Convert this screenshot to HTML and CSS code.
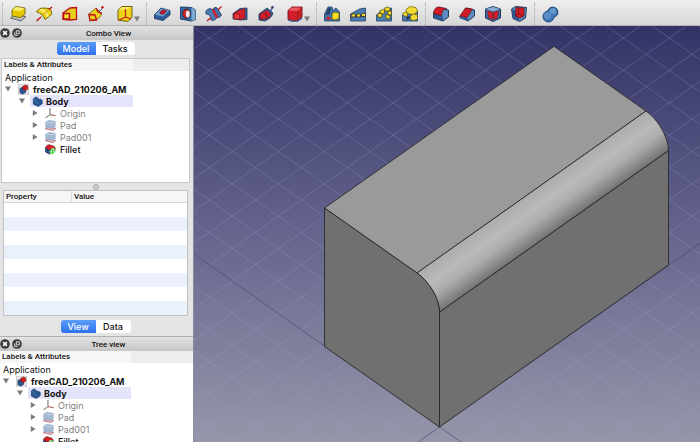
FILE: index.html
```html
<!DOCTYPE html>
<html lang="en">
<head>
    <meta charset="UTF-8">
    <meta name="viewport" content="width=device-width, initial-scale=1.0">
    <title>freeCAD_210206_AM</title>
    <link rel="stylesheet" href="styles.css">
</head>
<body>
    <!-- Shared icons -->
    <svg class="sprite" aria-hidden="true">
        <symbol id="i-close" viewBox="0 0 10 10">
            <circle cx="5" cy="5" r="4.8" fill="#3c3c3c"/>
            <path d="M3.1 3.1 6.9 6.9M6.9 3.1 3.1 6.9" stroke="#fff" stroke-width="1.5"/>
        </symbol>
        <symbol id="i-float" viewBox="0 0 10 10">
            <circle cx="5" cy="5" r="4.8" fill="#3c3c3c"/>
            <path d="M4.3 2.8h3v3h-3zM2.7 4.5v2.9h2.9" fill="none" stroke="#ddd" stroke-width="1"/>
        </symbol>
        <symbol id="i-down" viewBox="0 0 6 6"><path d="M0 .6h6L3 5.6z" fill="#7b7b7b"/></symbol>
        <symbol id="i-right" viewBox="0 0 6 6"><path d="M.8 0v6L5.6 3z" fill="#7b7b7b"/></symbol>
        <symbol id="i-doc" viewBox="0 0 10 10">
            <path d="M.5 0h9v10h-9z" fill="#e9e9ec" stroke="#aaa" stroke-width=".5"/>
            <path d="M1.8 4 4.2 3 7 4.5v3L4.4 9.2 1.8 8z" fill="#2a5693" stroke="#122c50" stroke-width=".6"/>
            <path d="M4.3 2.2 6.5.8l2.3 1v2.9L6.7 6 4.3 4.6z" fill="#d21c1c" stroke="#6d1010" stroke-width=".5"/>
        </symbol>
        <symbol id="i-body" viewBox="0 0 10 10">
            <path d="M1.2 2.5 3.5.8 5.7 2v1.5L7.5 2.8 9.3 4v3L5.7 9.5 1.2 7.4z" fill="#28578f" stroke="#1a4272" stroke-width=".6"/>
            <path d="M1.5 2.9 3.6 3.9v2L6 7" fill="none" stroke="#4b7db3" stroke-width=".7"/>
        </symbol>
        <symbol id="i-origin" viewBox="0 0 10 10">
            <path d="M4.5 0v6" stroke="#777" stroke-width="1"/>
            <path d="M4.5 6 .5 9" stroke="#6f936f" stroke-width="1"/>
            <path d="M4.5 6 9.8 7" stroke="#b06868" stroke-width="1"/>
        </symbol>
        <symbol id="i-pad" viewBox="0 0 10 10">
            <path d="M.3 7.9 3 6.8l6.7.8L7.5 9.6z" fill="#eec9cc" stroke="#bb6970" stroke-width=".8"/>
            <path d="M.7 1.7 3.5.4l5.8.7v5L7 7.7.7 6.8z" fill="#a3b8d2" stroke="#8ea4bf" stroke-width=".5"/>
            <path d="M.7 1.7 7 2.5 9.3 1.1" fill="none" stroke="#cfdcea" stroke-width=".7"/>
        </symbol>
        <symbol id="i-fillet" viewBox="0 0 11 11">
            <path d="M.5 3.8 4.5 6v4.3L.5 8z" fill="#244e87" stroke="#142c50" stroke-width=".6"/>
            <path d="M.5 3.8C1.2 1.3 3 .6 4.4.7l4.3 1.5c1 .6 1.6 1.6 1.6 2.9L4.5 6z" fill="#d51f26" stroke="#681212" stroke-width=".6"/>
            <path d="M4.5 6 10.3 4v4l-5.8 2.3z" fill="#3f9e43"/>
            <path d="M6.7 4.5h2v3h1.8l-2.8 3-2.8-3h1.8z" fill="#3ee03e" stroke="#e7ffe7" stroke-width=".6"/>
        </symbol>
    </svg>

    <header class="toolbar">
        <div class="tool-group">
            <button class="tool" aria-label="Pad">
                <svg viewBox="0 0 18 18"><path d="M1.500 13 5 10l12 1.500-5 4.500z" fill="#bdbdbd" stroke="#666" stroke-width="1"/><path d="M3 5 7 1.500 16 3v6l-4.500 3.500L3 11z" fill="#e3c800" stroke="#6b5c00" stroke-width=".8"/><path d="M3.500 5 7 2l8.500 1.200L11.500 6.300z" fill="#fbef6a"/></svg>
            </button>
            <button class="tool" aria-label="Revolution">
                <svg viewBox="0 0 18 18"><path d="M1.500 7C3 4 6 3 8 3l6 .5c2 1 3 3 2.500 6L10 14.500C9 11 6 8 1.500 7z" fill="#edd41c" stroke="#6b5c00" stroke-width=".9"/><path d="M5 4.800c4 .6 7 3.500 8 7" fill="none" stroke="#fff28a" stroke-width="1.500"/><path d="M1.500 16 6 12M14 4.500 17 2" stroke="#cc1111" stroke-width="1.400"/><path d="m6 12 8-7.500" stroke="#b38a16" stroke-width=".8"/></svg>
            </button>
            <button class="tool" aria-label="Additive loft">
                <svg viewBox="0 0 18 18"><path d="M2 8 9 3l6.500-.5v12L9 15l-7-.5z" fill="#e8cd1a" stroke="#b81414" stroke-width="1.300"/><path d="M2.500 8.500h6v5.500h-6z" fill="#f5de2e" stroke="#b81414" stroke-width="1.500"/></svg>
            </button>
            <button class="tool" aria-label="Additive pipe">
                <svg viewBox="0 0 18 18"><path d="M2 9 9 3l5 5c1 2-1 5-4 6l-7 1.500z" fill="#edd41c" stroke="#6e4c00" stroke-width=".8"/><path d="M2 9.500 8 10l1.500 5L3 15.500zM9 3l2 4 4 1.500" fill="none" stroke="#bd1717" stroke-width="1.400"/><path d="M12 6c2 0 3-2 3.500-4" fill="none" stroke="#2a4d91" stroke-width="1"/><circle cx="15.500" cy="2.300" r="1.200" fill="#c31818"/></svg>
            </button>
            <button class="tool tool-menu" aria-label="Additive primitive">
                <svg viewBox="0 0 18 18"><path d="M2 5 6 1.500h10V12l-4 4.500L2 15z" fill="#edd41c" stroke="#615000" stroke-width=".9"/><path d="M2.500 4.800 6 2h9.500L11 4.800z" fill="#f9ea60"/><path d="M9.500 4v8L3 15M9.500 12l5.500 2" fill="none" stroke="#c31b1b" stroke-width="1.200"/></svg>
                <svg class="arrow"><use href="#i-down"/></svg>
            </button>
        </div>
        <div class="tool-group">
            <button class="tool" aria-label="Pocket">
                <svg viewBox="0 0 18 18"><path d="M1.500 9.500 8 3l9 2.500v4.500L10 15.500l-8.500-2z" fill="#2c5c99" stroke="#173459" stroke-width=".8"/><path d="M2 9.500 8 3.500l8.500 2-6.500 6z" fill="#739fce"/><path d="m6.500 8 3-3 4 1L10 9.500z" fill="#d01c24" stroke="#602" stroke-width=".7"/></svg>
            </button>
            <button class="tool" aria-label="Hole">
                <svg viewBox="0 0 18 18"><path d="m1.500 2 11 .5 4 2.500v9.500l-4 1.500-11-2z" fill="#356aab" stroke="#14335c" stroke-width=".9"/><path d="M12.500 2.500 16.500 5v9.500l-4 1.500z" fill="#7ea9d2"/><ellipse cx="7.500" cy="8.700" rx="4" ry="4.700" fill="#d0202a" stroke="#222" stroke-width=".8"/><ellipse cx="8.800" cy="9" rx="2" ry="3.400" fill="#e9e9ee"/></svg>
            </button>
            <button class="tool" aria-label="Groove">
                <svg viewBox="0 0 18 18"><path d="M1 6c2-3 6-3 8 0l3 6c-1 3-4 4-6 3C6 11 4 9 1 9z" fill="#4a7db8" stroke="#173459" stroke-width=".8"/><path d="M8 4c1-1.500 3-2 4-1l4.500 7c-1 2-3 3-4.500 2.500z" fill="#3f72ac" stroke="#173459" stroke-width=".8"/><path d="m8 4.500 4 8" stroke="#d01f28" stroke-width="2.600"/><path d="M2 16 6 12.500M13 5l3.500-3.500" stroke="#c51d1d" stroke-width="1.400"/></svg>
            </button>
            <button class="tool" aria-label="Subtractive loft">
                <svg viewBox="0 0 18 18"><path d="m2 8.500 7-5 7-.5v11.500l-6 .5-8-1z" fill="#38659f" stroke="#173459" stroke-width=".8"/><path d="m2.500 8.500 7-4 4.500-.5v9.500L9 14.500l-6.500-1z" fill="#d01f28" stroke="#7b171c" stroke-width=".6"/><path d="M3 9h5.500v5H3z" fill="#e8363d" stroke="#901a20" stroke-width=".6"/></svg>
            </button>
            <button class="tool" aria-label="Subtractive pipe">
                <svg viewBox="0 0 18 18"><path d="m2 9 8-6 6 5c-1 4-4 6-8 8l-6-1z" fill="#38659f" stroke="#173459" stroke-width=".8"/><path d="m3 9 7-4 4 4c-1 3-2 4-5 5l-6 .5z" fill="#d01f28" stroke="#58121b" stroke-width=".6"/><path d="m8 8 2.500 5" stroke="#5a1218" stroke-width="1"/><path d="M12 6c2 0 3-2 3.500-4" fill="none" stroke="#2a4d91" stroke-width="1.100"/><circle cx="15.500" cy="2.300" r="1.200" fill="#26426c"/></svg>
            </button>
            <button class="tool tool-menu" aria-label="Subtractive primitive">
                <svg viewBox="0 0 18 18"><path d="M2 5.500 6 2h10v10l-4 4L2 14.500z" fill="#d01f28" stroke="#74131a" stroke-width=".9"/><path d="M2.500 5.500 6 2.500h9L11.500 6z" fill="#ea5a5e"/><path d="M12 6v10" stroke="#801a1a" stroke-width=".8"/><path d="m2 15 4 1.500 6-.5 4-3" fill="none" stroke="#315f99" stroke-width="1.200"/></svg>
                <svg class="arrow"><use href="#i-down"/></svg>
            </button>
        </div>
        <div class="tool-group">
            <button class="tool" aria-label="Mirrored">
                <svg viewBox="0 0 18 18"><path d="M1.500 9 5 2h4l1 3.500 3-2.500 3.500 4v9h-15z" fill="#4274ae" stroke="#203f66" stroke-width=".8"/><path d="m5 2.500 3 1-1.500 6L2.500 10z" fill="#26466f"/><path d="m2.500 13 3-1.500 3 2-3 1.500z" fill="#d01f28"/><path d="m9 8.500 3-1.500 4 1v5.500L12 15l-3-1z" fill="#f4dc27" stroke="#6b5c00" stroke-width=".8"/></svg>
            </button>
            <button class="tool" aria-label="Linear pattern">
                <svg viewBox="0 0 18 18"><path d="m1.500 9 9-5 6-1v13h-15z" fill="#4b7cb3" stroke="#203f66" stroke-width=".8"/><path d="m2 10 2.500-1.500 2 1v2.500H2zM7.500 9.500l2.500-1 1.500 1v2.500h-4zM12.500 9l2-1 2 1v2.500h-4z" fill="#efd729" stroke="#333" stroke-width=".9"/></svg>
            </button>
            <button class="tool" aria-label="Polar pattern">
                <svg viewBox="0 0 18 18"><path d="m1.500 10 5-4 10-3v13h-15z" fill="#4b7cb3" stroke="#203f66" stroke-width=".8"/><g fill="#f0d72a" stroke="#4e430a" stroke-width=".7"><path d="m2 9.500 3-1.500 2 1v3l-3 .5zM4.500 6l3-1.500 2 1v3l-3 .5zM9 3.500 12 2l3 1v3l-3.500.5zM12.500 6.500l2-1 2 1v3l-3 1zM10 10.500l3-1 2 1v3l-3 .5z"/></g></svg>
            </button>
            <button class="tool" aria-label="MultiTransform">
                <svg viewBox="0 0 18 18"><path d="m1.500 10 4-3 11-1v10h-15z" fill="#4b7cb3" stroke="#203f66" stroke-width=".8"/><g fill="#f2da2e" stroke="#6b5c00" stroke-width=".7"><path d="m5 4.500 4-3 6 1 1.500 4-3.500 3-7-1z"/><path d="m1.500 8.500 3-1.500 2 1v3l-3 .5zM9.500 11l3-2 4 1v4l-3.500 1.500-3.500-1z"/></g><path d="m5.500 12 3-1v3l-3 1z" fill="#1e355b"/></svg>
            </button>
        </div>
        <div class="tool-group">
            <button class="tool" aria-label="Fillet">
                <svg viewBox="0 0 18 18"><path d="M1.500 8 7 3l9.500 2v7L11 16l-9.500-3z" fill="#5b8bc0" stroke="#162e4f" stroke-width=".9"/><path d="m2 8 6 1.500 3 2.500v3.500l-9-3z" fill="#2d5a94"/><path d="M1.500 8.500C2 4 4 2 7 2l7.500 1.500C11 4.500 9.500 7 9.500 10.500z" fill="#d31d26" stroke="#5e1016" stroke-width=".7"/></svg>
            </button>
            <button class="tool" aria-label="Chamfer">
                <svg viewBox="0 0 18 18"><path d="M1.500 12 8 3l8.500 2v6L10 16z" fill="#5b8bc0" stroke="#162e4f" stroke-width=".9"/><path d="m2 12 8 1v2.500l-8-2z" fill="#2d5a94"/><path d="M2 11 7.500 3l7 1L9 12.500z" fill="#d31d26" stroke="#5e1016" stroke-width=".7"/></svg>
            </button>
            <button class="tool" aria-label="Draft">
                <svg viewBox="0 0 18 18"><path d="M1.500 4 9 1.500 16.500 4v9L9 16.500 1.500 13z" fill="#3b6da8" stroke="#162e4f" stroke-width=".9"/><path d="M2 4 9 2l7 2-7 2.500z" fill="#8aafd3"/><path d="m3.500 6 5 1.200v7.300l-4-2zM9.500 7.200l5-1.200-1 6.500-4 2z" fill="#d31d26" stroke="#8b1218" stroke-width=".6"/></svg>
            </button>
            <button class="tool" aria-label="Thickness">
                <svg viewBox="0 0 18 18"><path d="m1.500 4 4-2.500 11 1-1 10.500-6 3.500-6.500-3z" fill="#5b8bc0" stroke="#162e4f" stroke-width=".9"/><path d="m2 4.500 7 2.500v9l-6-3z" fill="#2d5a94"/><path d="M6 2.500 14 3v8L9.500 13 5.500 11z" fill="#d31d26" stroke="#611118" stroke-width=".7"/><path d="M8.500 3v6l-3 2M8.500 9l5.500 1.500" fill="none" stroke="#871017" stroke-width=".9"/></svg>
            </button>
        </div>
        <div class="tool-group">
            <button class="tool" aria-label="Boolean operation">
                <svg viewBox="0 0 18 18"><path d="M7 6a5 5 0 1 1 6 6A5.500 5.500 0 1 1 7 6z" fill="#3f77b6" stroke="#1d4273" stroke-width="1"/><circle cx="6.500" cy="10.500" r="3.500" fill="#5b8fc8"/><circle cx="12" cy="6" r="3" fill="#6497cc"/></svg>
            </button>
        </div>
    </header>

    <main class="workspace">
        <aside class="sidebar">
            <section class="dock combo">
                <div class="dock-title">
                    <button class="dock-button" aria-label="Close"><svg><use href="#i-close"/></svg></button>
                    <button class="dock-button" aria-label="Float"><svg><use href="#i-float"/></svg></button>
                    <h2>Combo View</h2>
                </div>
                <div class="pane">
                    <div class="tabs">
                        <button class="tab active">Model</button>
                        <button class="tab">Tasks</button>
                    </div>
                    <div class="tree">
                        <div class="tree-head"><span>Labels &amp; Attributes</span></div>
                        <ul>
                            <li class="row root">Application</li>
                            <li class="row level-1 strong"><button class="toggle" aria-label="Collapse"><svg><use href="#i-down"/></svg></button><svg class="icon"><use href="#i-doc"/></svg>freeCAD_210206_AM</li>
                            <li class="row level-2 strong"><button class="toggle" aria-label="Collapse"><svg><use href="#i-down"/></svg></button><span class="selected"><svg class="icon"><use href="#i-body"/></svg>Body</span></li>
                            <li class="row level-3 muted"><button class="toggle" aria-label="Expand"><svg><use href="#i-right"/></svg></button><svg class="icon"><use href="#i-origin"/></svg>Origin</li>
                            <li class="row level-3 muted"><button class="toggle" aria-label="Expand"><svg><use href="#i-right"/></svg></button><svg class="icon"><use href="#i-pad"/></svg>Pad</li>
                            <li class="row level-3 muted"><button class="toggle" aria-label="Expand"><svg><use href="#i-right"/></svg></button><svg class="icon"><use href="#i-pad"/></svg>Pad001</li>
                            <li class="row level-3 leaf"><svg class="icon"><use href="#i-fillet"/></svg>Fillet</li>
                        </ul>
                    </div>
                    <div class="splitter"></div>
                    <table class="properties">
                        <thead>
                            <tr><th class="name">Property</th><th>Value</th></tr>
                        </thead>
                        <tbody>
                            <tr><td></td><td></td></tr>
                            <tr><td></td><td></td></tr>
                            <tr><td></td><td></td></tr>
                            <tr><td></td><td></td></tr>
                            <tr><td></td><td></td></tr>
                            <tr><td></td><td></td></tr>
                            <tr><td></td><td></td></tr>
                            <tr><td></td><td></td></tr>
                        </tbody>
                    </table>
                    <div class="tabs tabs-small">
                        <button class="tab active">View</button>
                        <button class="tab">Data</button>
                    </div>
                </div>
            </section>

            <section class="dock tree-view">
                <div class="dock-title">
                    <button class="dock-button" aria-label="Close"><svg><use href="#i-close"/></svg></button>
                    <button class="dock-button" aria-label="Float"><svg><use href="#i-float"/></svg></button>
                    <h2>Tree view</h2>
                </div>
                <div class="tree">
                    <div class="tree-head"><span>Labels &amp; Attributes</span></div>
                    <ul>
                        <li class="row root">Application</li>
                        <li class="row level-1 strong"><button class="toggle" aria-label="Collapse"><svg><use href="#i-down"/></svg></button><svg class="icon"><use href="#i-doc"/></svg>freeCAD_210206_AM</li>
                        <li class="row level-2 strong"><button class="toggle" aria-label="Collapse"><svg><use href="#i-down"/></svg></button><span class="selected"><svg class="icon"><use href="#i-body"/></svg>Body</span></li>
                        <li class="row level-3 muted"><button class="toggle" aria-label="Expand"><svg><use href="#i-right"/></svg></button><svg class="icon"><use href="#i-origin"/></svg>Origin</li>
                        <li class="row level-3 muted"><button class="toggle" aria-label="Expand"><svg><use href="#i-right"/></svg></button><svg class="icon"><use href="#i-pad"/></svg>Pad</li>
                        <li class="row level-3 muted"><button class="toggle" aria-label="Expand"><svg><use href="#i-right"/></svg></button><svg class="icon"><use href="#i-pad"/></svg>Pad001</li>
                        <li class="row level-3 leaf"><svg class="icon"><use href="#i-fillet"/></svg>Fillet</li>
                    </ul>
                </div>
            </section>
        </aside>

        <div class="viewport">
            <svg class="scene" viewBox="194 26 506 416" preserveAspectRatio="xMinYMin slice" role="img" aria-label="3D model">
                <defs>
                    <linearGradient id="round" gradientUnits="userSpaceOnUse" x1="417" y1="273" x2="442.900" y2="309.600">
                        <stop offset="0" stop-color="#acacac"/>
                        <stop offset=".35" stop-color="#bababa"/>
                        <stop offset=".6" stop-color="#adadad"/>
                        <stop offset=".85" stop-color="#8b8b8b"/>
                        <stop offset="1" stop-color="#747474"/>
                    </linearGradient>
                </defs>
                <path id="grid" fill="none" stroke="#a9a9dc" stroke-opacity=".25" stroke-width="1"/>
                <!-- axes -->
                <path d="M193 253.400 461 442M418 442 700 243.300" fill="none" stroke="#3e3e68" stroke-opacity=".6" stroke-width=".9"/>
                <!-- solid -->
                <g stroke="#222" stroke-width=".8" stroke-linejoin="round">
                    <path d="M324.500 208 554 46.300 646 111 417 273z" fill="#9a9a9a"/>
                    <path d="M439.500 312 668.500 150.500V265L439.500 427z" fill="#707070"/>
                    <path d="M417 273 646 111C658.400 119.700 668.500 137.700 668.500 150.500L439.500 312C439.500 299.200 429.400 281.700 417 273z" fill="url(#round)"/>
                    <path d="M324.500 208 417 273C429.400 281.700 439.500 299.200 439.500 312V427L324.500 346.500z" fill="#707070"/>
                </g>
            </svg>
        </div>
    </main>

    <script>
        // Ground grid: two families of parallel lines through the origin corner
        const origin = { x: 439.3, y: 426.8 };
        const step = 32.4;
        const slope = step / 46;
        let d = '';

        for (let i = -20; i <= 20; i++) {
            if (i === 0) continue; // the axes are drawn separately
            const y = origin.y + i * step;
            const left = (origin.x - 190) * slope;
            const right = (1400 - origin.x) * slope;
            d += `M190 ${y - left}L1400 ${y + right}`;
            d += `M190 ${y + left}L1400 ${y - right}`;
        }

        document.getElementById('grid').setAttribute('d', d);
    </script>
</body>
</html>
```
FILE: styles.css
```css
* {
    box-sizing: border-box;
}

body {
    margin: 0;
    height: 100vh;
    display: flex;
    flex-direction: column;
    overflow: hidden;
    font-family: Inter, "Liberation Sans", sans-serif;
    font-size: 9px;
    color: #111;
    background: #e4e4e4;
}

button {
    margin: 0;
    padding: 0;
    border: 0;
    background: none;
    font: inherit;
    color: inherit;
}

svg {
    display: block;
    flex: none;
}

.sprite {
    width: 0;
    height: 0;
    position: absolute;
}

/* Toolbar */
.toolbar {
    flex: none;
    display: flex;
    align-items: center;
    height: 26px;
    padding: 2px 2px 0;
    background: linear-gradient(#efefef, #d6d6d6);
    border-bottom: 1px solid #b4b4b4;
}

.tool-group {
    display: flex;
    align-items: center;
    gap: 8px;
    height: 22px;
    padding: 0 6px;
    border-left: 1px dotted #a5a5a5;
}

.tool svg {
    width: 18px;
    height: 18px;
}

.tool-menu {
    display: flex;
    align-items: flex-end;
    margin-left: 3px;
}

.tool .arrow {
    width: 6px;
    height: 8px;
}

/* Docks */
.workspace {
    flex: 1;
    display: flex;
    min-height: 0;
}

.sidebar {
    flex: none;
    width: 194px;
    overflow: hidden;
    border-right: 1px solid #8c8ca0;
}

.dock-title {
    display: flex;
    align-items: center;
    gap: 2px;
    height: 14px;
    background: linear-gradient(#e2e2e2, #c6c6c6);
}

.dock-title h2 {
    flex: 1;
    margin: 0;
    font-family: Roboto, sans-serif;
    font-size: 8px;
    font-weight: 500;
    text-align: center;
}

.dock-button svg {
    width: 10px;
    height: 10px;
}

.pane {
    padding: 2px 3px 3px 1px;
}

.tabs {
    display: flex;
    justify-content: center;
    height: 13px;
    margin-bottom: 3px;
}

.tab {
    width: 39px;
    font-size: 9px;
    font-weight: 500;
    line-height: 13px;
    background: #fff;
    border-radius: 0 3px 3px 0;
}

.tab.active {
    color: #fff;
    background: linear-gradient(#5b9cf8, #2f70ee);
    border-radius: 3px 0 0 3px;
}

.tabs-small {
    margin: 4px 0 0;
}

.tabs-small .tab {
    width: 35px;
}

/* Tree */
.tree {
    background: #fff;
}

.combo .tree {
    min-height: 125px;
    border: 1px solid #c8c8c8;
}

.tree-head {
    background: #ededed;
    font-family: Roboto, sans-serif;
    font-size: 8px;
    font-weight: 500;
    line-height: 12px;
}

.tree-head span {
    display: block;
    width: 131px;
    padding-left: 2px;
    background: #f6f6f6;
}

.tree ul {
    margin: 0;
    padding: 0;
    list-style: none;
}

.row {
    display: flex;
    align-items: center;
    gap: 4px;
    height: 12px;
    font-weight: 500;
    white-space: nowrap;
}

.root {
    padding-left: 3px;
    font-weight: 400;
}

.level-1 {
    padding-left: 3px;
}

.level-2 {
    gap: 2px;
    padding-left: 17px;
}

.level-3 {
    padding-left: 30px;
}

.toggle {
    width: 9px;
}

.toggle svg {
    width: 6px;
    height: 6px;
}

.icon {
    width: 11px;
    height: 11px;
}

.leaf {
    padding-left: 43px;
}

.strong {
    font-weight: 700;
}

.muted {
    color: #7f7f7f;
    font-weight: 400;
}

.selected {
    display: flex;
    align-items: center;
    gap: 3px;
    width: 103px;
    height: 12px;
    padding-left: 2px;
    background: #e4e4fb;
}

.splitter {
    display: flex;
    align-items: center;
    justify-content: center;
    height: 7px;
}

.splitter::after {
    content: "";
    width: 4px;
    height: 4px;
    border: 1px solid #aaa;
    border-radius: 50%;
    background: #d0d0d0;
}

/* Property table */
.properties {
    width: calc(100% - 4px);
    margin: 0 2px;
    table-layout: fixed;
    border: 1px solid #c0c0c0;
    border-spacing: 0;
    background: #fff;
}

.properties th {
    height: 12px;
    padding: 0 2px;
    border-bottom: 1px solid #d2d2d2;
    background: #f6f6f6;
    font-family: Roboto, sans-serif;
    font-size: 8px;
    font-weight: 500;
    line-height: 11px;
    text-align: left;
}

.properties .name {
    width: 68px;
    border-right: 1px solid #dcdcdc;
}

.properties td {
    height: 14px;
    padding: 0;
}

.properties tbody tr:nth-child(even) {
    background: #eaf0fc;
}

.tree-view .dock-title {
    height: 15px;
    border-top: 1px solid #b0b0b0;
}

/* 3D view */
.viewport {
    flex: 1;
    min-width: 0;
    background: linear-gradient(#333366, #65658e 50%, #9696aa);
}

.scene {
    width: 100%;
    height: 100%;
}
```
